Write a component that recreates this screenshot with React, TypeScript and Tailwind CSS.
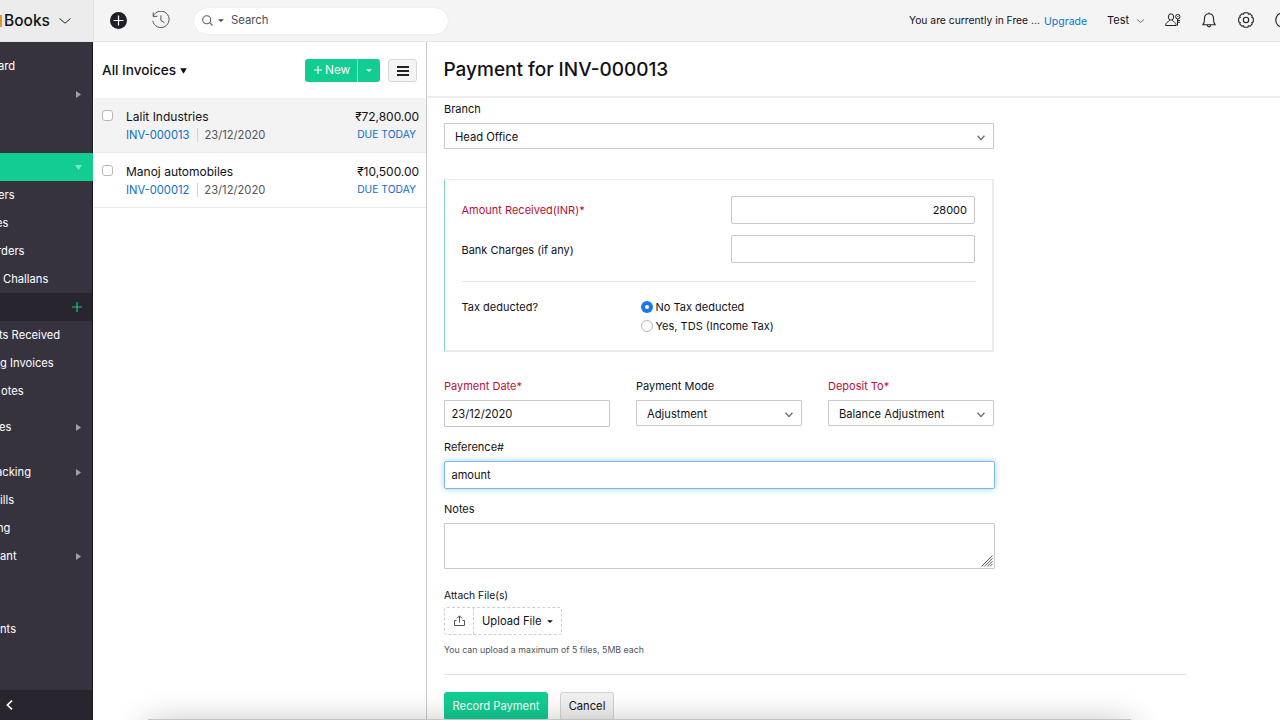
import { ReactNode } from "react";

type NavItem = { label: string; h: string; arrow?: "right" | "down"; plus?: boolean; tone?: string; x?: string };

const nav: NavItem[] = [
  { label: "ard", h: "h-[28px]", x: "-ml-[2px]" },
  { label: "", h: "h-[28px]", arrow: "right" },
  { label: "", h: "h-[45px]" },
  { label: "", h: "h-[28px]", arrow: "down", tone: "w-[93px] bg-[#12cd92]" },
  { label: "ers", h: "h-[28px]", x: "-ml-[2px]" },
  { label: "es", h: "h-[28px]", x: "-ml-[4px]" },
  { label: "rders", h: "h-[28px]", x: "-ml-[3px]" },
  { label: "Challans", h: "h-[28px]", x: "ml-[3px]" },
  { label: "", h: "h-[28px]", plus: true, tone: "bg-[#28252f]" },
  { label: "ts Received", h: "h-[28px]", x: "-ml-px" },
  { label: "g Invoices", h: "h-[28px]", x: "ml-0" },
  { label: "otes", h: "h-[28px]", x: "ml-px" },
  { label: "", h: "h-[8px]" },
  { label: "es", h: "h-[28px]", arrow: "right", x: "-ml-px" },
  { label: "", h: "h-[17px]" },
  { label: "acking", h: "h-[28px]", arrow: "right", x: "-ml-[4px]" },
  { label: "ills", h: "h-[28px]", x: "ml-0" },
  { label: "ng", h: "h-[28px]", x: "-ml-[3px]" },
  { label: "ant", h: "h-[28px]", arrow: "right", x: "ml-0" },
  { label: "", h: "h-[45px]" },
  { label: "nts", h: "h-[28px]", x: "ml-0" },
];

function Caret({ className }: { className: string }) {
  return (
    <svg viewBox="0 0 8 6" preserveAspectRatio="none" className={className} fill="currentColor">
      <path d="M0.2 0.3h7.600L4 5.800z" />
    </svg>
  );
}

function Chevron({ className, width = 1.2 }: { className: string; width?: number }) {
  return (
    <svg viewBox="0 0 12 6" className={className} fill="none" stroke="currentColor" strokeWidth={width}>
      <path d="M0.5 0.5 6 5.2 11.5 0.5" />
    </svg>
  );
}

function SelectBox({ children, className }: { children: ReactNode; className: string }) {
  return (
    <div className={`flex h-[26px] items-center justify-between rounded-[1px] border border-[#c5c8cc] pr-2 pl-[10px] text-[11.2px] ${className}`}>
      <span className="mt-px">{children}</span>
      <svg viewBox="0 0 8 6" className="mt-[3px] h-[6px] w-[8px] text-[#666]" fill="none" stroke="currentColor" strokeWidth="1.3">
        <path d="M0.6 0.8 4 4.6 7.4 0.8" />
      </svg>
    </div>
  );
}

function InvoiceRow({ name, num, amount, active }: { name: string; num: string; amount: string; active?: boolean }) {
  return (
    <div className={`flex h-[55px] shrink-0 border-b border-[#e9e9ec] pr-[7px] pl-[8px] ${active ? "bg-[#f3f3f3]" : ""}`}>
      <span className="mt-[12px] h-[11px] w-[11px] shrink-0 rounded-[3px] border border-[#b8b8b8] bg-white" />
      <div className="ml-[13px] flex-1 pt-[9px]">
        <div className="text-[12px] leading-[20px]">{name}</div>
        <div className="flex items-center text-[11.2px] leading-[16px]">
          <span className="text-[#0f6fc6]">{num}</span>
          <span className="mr-[6px] ml-[8px] h-[14px] w-px bg-[#d4d4d4]" />
          <span className="text-[#555]">23/12/2020</span>
        </div>
      </div>
      <div className="pt-[9px] text-right">
        <div className="text-[12px] leading-[20px] tracking-[-0.05px]">{amount}</div>
        <div className="pr-[3px] text-[10.3px] leading-[15px] text-[#0f6fc6]">DUE TODAY</div>
      </div>
    </div>
  );
}

function Sidebar() {
  return (
    <nav className="flex w-[93px] shrink-0 flex-col border-r border-[#17151d] bg-[#36333f] pt-[10px] text-[11.2px] text-white">
      {nav.map((n, i) => (
        <div key={i} className={`flex shrink-0 items-center overflow-hidden ${n.h} ${n.tone ?? ""}`}>
          <span className={`mt-px whitespace-nowrap ${n.x ?? ""}`}>{n.label}</span>
          {n.arrow === "right" && (
            <svg viewBox="0 0 5 7" className="mr-[11px] ml-auto h-[7px] w-[5px]" fill="#a19fa9"><path d="M0 0v7l5-3.5z" /></svg>
          )}
          {n.arrow === "down" && (
            <svg viewBox="0 0 7 5" className="mr-[11px] ml-auto h-[5px] w-[7px]" fill="#7fe6c5"><path d="M0 0h7L3.5 5z" /></svg>
          )}
          {n.plus && (
            <svg viewBox="0 0 10 10" className="mr-[10px] ml-auto h-[10px] w-[10px]" stroke="#1fc08e" strokeWidth="1.2"><path d="M5 0v10M0 5h10" /></svg>
          )}
        </div>
      ))}
      <div className="mt-auto flex h-[30px] items-center bg-[#28252f] pl-[6px]">
        <svg viewBox="0 0 7 10" className="h-[10px] w-[7px]" fill="none" stroke="#fff" strokeWidth="1.6"><path d="M6 0.6 1.4 5 6 9.4" /></svg>
      </div>
    </nav>
  );
}

function Header() {
  return (
    <header className="flex h-[42px] shrink-0 border-b border-[#e4e4e4] bg-[#f4f4f4]">
      <div className="flex w-[94px] shrink-0 items-center border-r border-[#e0e0e0] bg-[#ececec]">
        <span className="h-[12px] w-[2px] shrink-0 bg-[#e5952f]" />
        <span className="ml-[2px] w-[46px] text-[15.5px] font-medium">Books</span>
        <Chevron className="ml-[9px] h-[6px] w-[12px] text-[#222]" width={1} />
      </div>
      <div className="flex min-w-0 flex-1 items-center">
        <svg viewBox="0 0 18 18" className="ml-[16px] h-[17px] w-[17px] shrink-0"><circle cx="9" cy="9" r="9" fill="#201e28" /><path d="M9 3.8v10.4M3.8 9h10.4" stroke="#fff" strokeWidth="1.3" /></svg>
        <svg viewBox="0 0 18 18" className="mb-[2px] ml-[25px] h-[18px] w-[18px] shrink-0" fill="none" stroke="#555" strokeWidth="1">
          <path d="M1.3 5.2A8.2 8.2 0 1 1 .8 9.8M1.2 1.4v4h4M8.9 4.3v5.2l3.6 2.2" />
        </svg>
        <div className="ml-[24px] flex h-[26px] w-[254px] shrink-0 items-center rounded-full bg-white pl-[8px] shadow-[0_0_1px_#ccc]">
          <svg viewBox="0 0 11 11" className="h-[11px] w-[11px]" fill="none" stroke="#5c5f66" strokeWidth="1.1"><circle cx="4.7" cy="4.7" r="4" /><path d="m7.7 7.7 2.8 2.8" /></svg>
          <Caret className="ml-[5px] h-[3px] w-[6px] text-[#444]" />
          <span className="ml-[7px] text-[11.3px] text-[#4a4d55]">Search</span>
        </div>
        <span className="ml-auto w-[129px] shrink-0 text-[10.3px] whitespace-nowrap">You are currently in Free ...</span>
        <span className="mt-[3px] ml-[6px] w-[42px] shrink-0 text-[10.5px] text-[#0877d1]">Upgrade</span>
        <span className="ml-[21px] w-[22px] shrink-0 text-[11px]">Test</span>
        <Chevron className="ml-[7px] h-[4px] w-[9px] shrink-0 text-[#444]" width={1.1} />
        <svg viewBox="0 0 16 14" className="mb-[2px] ml-[20px] h-[14px] w-[16px] shrink-0" fill="none" stroke="#222" strokeWidth="1">
          <ellipse cx="6" cy="4" rx="2.700" ry="3.200" />
          <path d="M4.600 7c-.2 2.200-3.700 1.400-4 5.500h10.700M7.400 7c.1 1 .9 1.500 1.900 1.900" />
          <circle cx="12.800" cy="3.700" r="2.200" />
          <path d="M12.800 3v1M12.500 6v6.500M12.500 7.500h2.500M12.500 9.300h2.300M9.500 9.300c1 .4 1.500 1.700 1.800 3.200" />
        </svg>
        <svg viewBox="0 0 14 16" className="mb-[2px] ml-[21px] h-[16px] w-[14px] shrink-0" fill="none" stroke="#222" strokeWidth="1.1">
          <path d="M7 .5v1.200M.8 12.800c1.500-1.700 1.700-2.900 1.700-6.100C2.500 3.500 4.200 1.700 7 1.700s4.500 1.800 4.500 5c0 3.200.2 4.400 1.700 6.100zM5.300 13.200c.2 2.200 3.200 2.200 3.400 0" />
        </svg>
        <svg viewBox="0 0 16 16" className="mb-[2px] ml-[22px] h-[16px] w-[16px] shrink-0" fill="none" stroke="#222" strokeWidth="1.1" strokeLinejoin="round">
          <circle cx="8" cy="8" r="2.700" />
          <path d="M6.100.7h3.800l.5 1.600 1.500-.6 2.400 2.400-.6 1.500 1.600.5v3.800l-1.600.5.6 1.500-2.400 2.400-1.500-.6-.5 1.600H6.100l-.5-1.600-1.500.6-2.400-2.400.6-1.500-1.600-.5V6.100l1.600-.5-.6-1.500 2.400-2.400 1.500.6z" />
        </svg>
        <div className="mb-[2px] ml-[21px] w-[5px] shrink-0 overflow-hidden">
          <svg viewBox="0 0 16 16" className="h-[16px] w-[16px]" fill="none" stroke="#222" strokeWidth="1.1"><circle cx="8" cy="8" r="7.300" /></svg>
        </div>
      </div>
    </header>
  );
}

export default function App() {
  return (
    <div className="relative flex h-[720px] w-[1280px] flex-col overflow-hidden bg-white font-[Inter,sans-serif] text-[#111116]">
      <Header />
      <div className="flex min-h-0 flex-1">
        <Sidebar />
        <section className="flex w-[334px] shrink-0 flex-col border-r border-[#c9c9c9] pl-px">
          <div className="flex h-[56px] shrink-0 items-center pr-[9px] pl-[8px]">
            <span className="w-[74px] text-[13.6px] font-[450] whitespace-nowrap">All Invoices</span>
            <Caret className="mt-px ml-[4px] h-[6px] w-[7px]" />
            <div className="ml-auto flex h-[23px] w-[75px] rounded-[3px] bg-[#12cd92] text-white">
              <div className="flex w-[53px] items-center border-r border-[#7be5c4] pl-[9px] text-[11.8px]">
                <svg viewBox="0 0 8 8" className="mr-[3px] h-[8px] w-[8px]" stroke="#fff" strokeWidth="1.1"><path d="M4 0v8M0 4h8" /></svg>
                <span className="mt-px">New</span>
              </div>
              <div className="flex flex-1 items-center justify-center"><Caret className="h-[3px] w-[6px]" /></div>
            </div>
            <div className="ml-[8px] flex h-[23px] w-[29px] flex-col items-center justify-center gap-[2px] rounded-[3px] border border-[#d8d8d8] bg-[#f4f4f4] pt-px">
              <span className="h-[2px] w-[12px] bg-[#222]" />
              <span className="h-[2px] w-[12px] bg-[#222]" />
              <span className="h-[2px] w-[12px] bg-[#222]" />
            </div>
          </div>
          <InvoiceRow name="Lalit Industries" num="INV-000013" amount="₹72,800.00" active />
          <InvoiceRow name="Manoj automobiles" num="INV-000012" amount="₹10,500.00" />
        </section>
        <main className="flex min-w-0 flex-1 flex-col text-[11px] leading-[14px]">
          <div className="flex h-[56px] shrink-0 items-center border-b-2 border-[#ededed] pt-[2px] pl-[16.5px] text-[19px] font-medium">Payment for INV-000013</div>
          <div className="flex w-[759px] flex-col pt-[4px] pl-[17px]">
            <label>Branch</label>
            <SelectBox className="mt-[7px] w-[550px]">Head Office</SelectBox>
            <div className="mt-[30px] flex h-[173px] w-[550px] flex-col border border-r-2 border-b-2 border-[#ebebeb] border-l-[#7ed9b4] pr-[17px] pl-[16.5px]">
              <div className="mt-[16px] flex items-center justify-between">
                <span className="text-[#b90f34]">Amount Received(INR)*</span>
                <div className="flex h-[28px] w-[244px] items-center justify-end rounded-[2px] border border-[#c5c8cc] pr-[7px]">28000</div>
              </div>
              <div className="mt-[11px] flex items-center justify-between">
                <span className="mt-px">Bank Charges (if any)</span>
                <div className="h-[28px] w-[244px] rounded-[2px] border border-[#c5c8cc]" />
              </div>
              <div className="mt-[18px] h-px bg-[#e4e4e4]" />
              <div className="mt-[18px] flex">
                <span className="w-[179px]">Tax deducted?</span>
                <div className="flex flex-col gap-[5px]">
                  <div className="flex items-center gap-[3px]">
                    <span className="flex h-[12px] w-[12px] items-center justify-center rounded-full bg-[#1c76ec]"><span className="h-[4px] w-[4px] rounded-full bg-white" /></span>
                    No Tax deducted
                  </div>
                  <div className="flex items-center gap-[3px]">
                    <span className="h-[12px] w-[12px] rounded-full border border-[#b8b8b8]" />
                    Yes, TDS (Income Tax)
                  </div>
                </div>
              </div>
            </div>
            <div className="mt-[27px] flex gap-[26px]">
              <div className="w-[166px]">
                <div className="text-[#b90f34]">Payment Date*</div>
                <div className="mt-[7px] flex h-[27px] items-center rounded-[1px] border border-[#c5c8cc] pl-[6.500px] text-[11.2px]">23/12/2020</div>
              </div>
              <div className="w-[166px]">
                <div>Payment Mode</div>
                <SelectBox className="mt-[7px] w-full">Adjustment</SelectBox>
              </div>
              <div className="w-[166px]">
                <div className="text-[#b90f34]">Deposit To*</div>
                <SelectBox className="mt-[7px] w-full">Balance Adjustment</SelectBox>
              </div>
            </div>
            <label className="mt-[13px]">Reference#</label>
            <div className="mt-[7px] flex h-[28px] w-[551px] items-center rounded-[2px] border border-[#7db8e8] pl-[6.500px] shadow-[0_0_6px_#9fd0f6]">amount</div>
            <label className="mt-[13px]">Notes</label>
            <div className="mt-[7px] flex h-[46px] w-[551px] items-end justify-end rounded-[1px] border border-[#c5c8cc] p-px">
              <svg viewBox="0 0 12 12" className="h-[12px] w-[12px]" stroke="#444" strokeWidth="0.9"><path d="M0.500 11.500 11.500.5M3.300 11.500 11.500 3.300M6.100 11.500l5.400-5.400M8.900 11.500l2.600-2.600" /></svg>
            </div>
            <label className="mt-[19px] text-[10.3px]">Attach File(s)</label>
            <div className="mt-[5px] flex h-[28px] w-[118px] rounded-[3px] border border-dashed border-[#cfcfcf]">
              <div className="flex w-[29px] items-center justify-center border-r border-dashed border-[#cfcfcf]">
                <svg viewBox="0 0 11 11" className="mb-[2px] h-[11px] w-[11px]" fill="none" stroke="#555"><path d="M2.500 5.500h-2v5h10v-5h-2M5.500 7.500V1M3 3.300 5.500.8 8 3.300" /></svg>
              </div>
              <div className="flex items-center pl-[8px] text-[11.2px]">Upload File<Caret className="ml-[5px] h-[3px] w-[6px]" /></div>
            </div>
            <div className="mt-[8px] text-[8.8px] text-[#555]">You can upload a maximum of 5 files, 5MB each</div>
            <div className="mt-[17px] h-px shrink-0 bg-[#e2e2e2]" />
            <div className="mt-[17px] flex gap-[12px] text-[11.2px]">
              <div className="flex h-[28px] w-[104px] items-center justify-center rounded-[3px] bg-[#12cd92] text-white">Record Payment</div>
              <div className="flex h-[28px] w-[54px] items-center justify-center rounded-[3px] border border-[#d2d2d2] bg-[#f1f1f1]">Cancel</div>
            </div>
          </div>
        </main>
      </div>
      <div className="pointer-events-none absolute top-[719px] left-[148px] h-[60px] w-[983px] bg-[#c4c4c4] shadow-[0_6px_34px_rgba(0,0,0,0.3)]" />
    </div>
  );
}
